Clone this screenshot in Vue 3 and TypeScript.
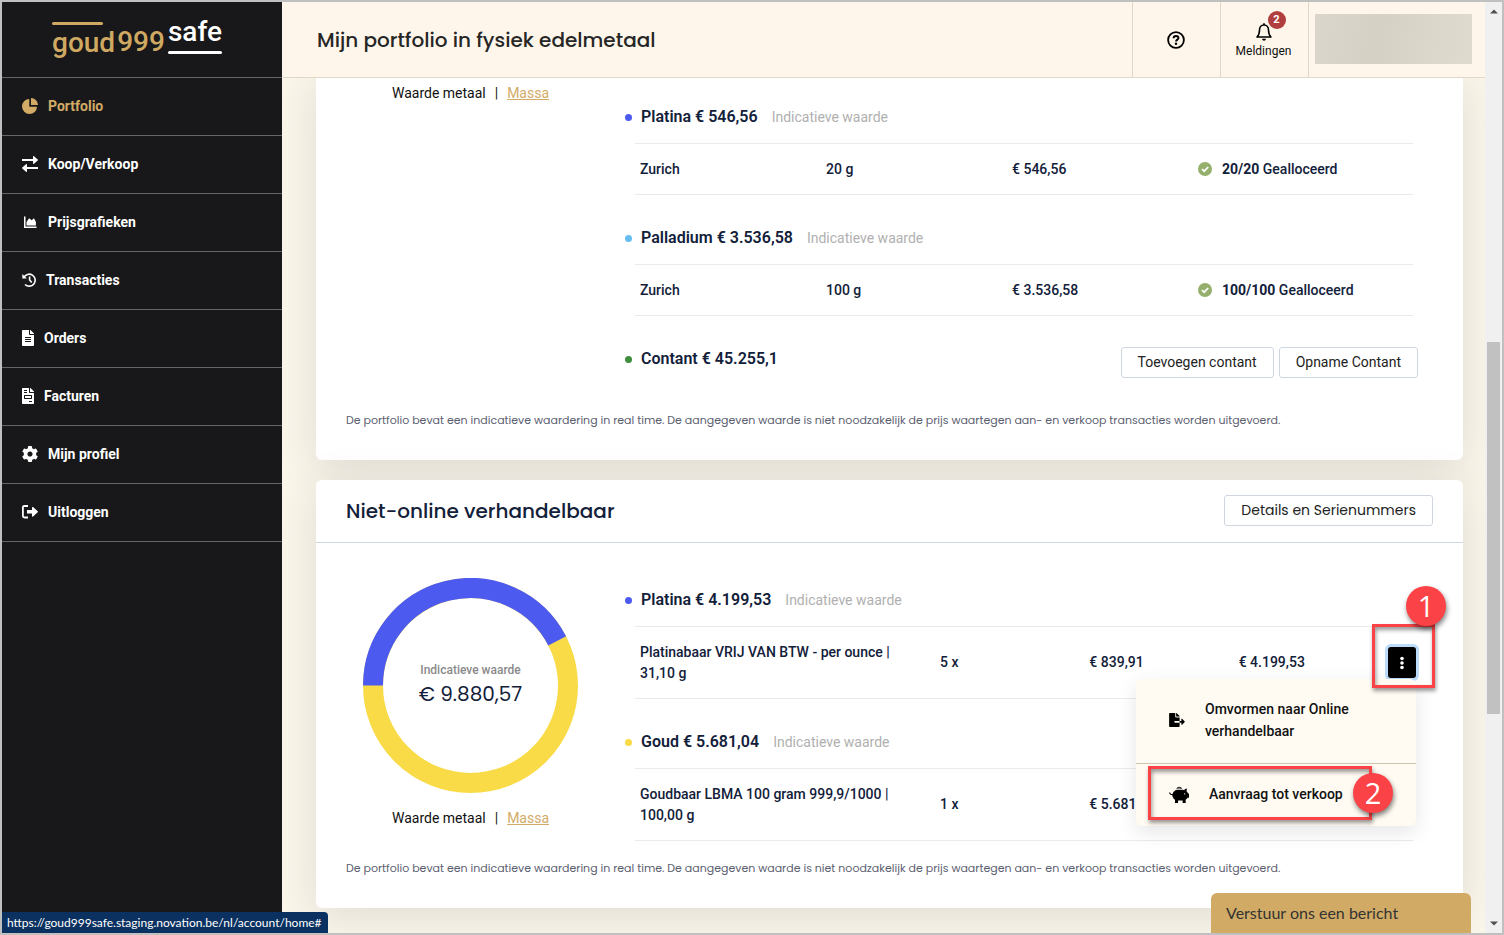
<script setup lang="ts">
import { ref } from 'vue'

interface NavItem { label: string; icon: string; width: number; active?: boolean }
interface Holding { metal: string; total: string; color: string; amount: string; value: string; allocated: string }
interface Product { metal: string; total: string; color: string; name: string; count: string; price: string; value: string; menu: boolean }

const nav: NavItem[] = [
  { label: 'Portfolio', icon: 'pie', width: 16, active: true },
  { label: 'Koop/Verkoop', icon: 'exchange', width: 16 },
  { label: 'Prijsgrafieken', icon: 'area', width: 16 },
  { label: 'Transacties', icon: 'history', width: 14 },
  { label: 'Orders', icon: 'file', width: 12 },
  { label: 'Facturen', icon: 'invoice', width: 12 },
  { label: 'Mijn profiel', icon: 'cog', width: 16 },
  { label: 'Uitloggen', icon: 'logout', width: 16 },
]

const holdings: Holding[] = [
  { metal: 'Platina', total: '€ 546,56', color: 'blue', amount: '20 g', value: '€ 546,56', allocated: '20/20' },
  { metal: 'Palladium', total: '€ 3.536,58', color: 'sky', amount: '100 g', value: '€ 3.536,58', allocated: '100/100' },
]

const products: Product[] = [
  { metal: 'Platina', total: '€ 4.199,53', color: 'blue', name: 'Platinabaar VRIJ VAN BTW - per ounce | 31,10 g', count: '5 x', price: '€ 839,91', value: '€ 4.199,53', menu: true },
  { metal: 'Goud', total: '€ 5.681,04', color: 'yellow', name: 'Goudbaar LBMA 100 gram 999,9/1000 | 100,00 g', count: '1 x', price: '€ 5.681,04', value: '', menu: false },
]

const note = 'De portfolio bevat een indicatieve waardering in real time. De aangegeven waarde is niet noodzakelijk de prijs waartegen aan- en verkoop transacties worden uitgevoerd.'
const menuOpen = ref(true)
</script>

<template>
  <div class="window">
    <aside class="sidebar">
      <a class="logo" href="#" aria-label="goud999safe">
        <span class="logo-goud">goud</span><span class="logo-nines">999</span><span class="logo-safe">safe</span>
      </a>
      <nav>
        <a v-for="item in nav" :key="item.label" href="#" class="nav-item" :class="{ active: item.active }">
          <svg v-if="item.icon === 'pie'" :width="item.width" height="16" viewBox="0 0 16 16"><path d="M7.3 1v7.7H15A7.5 7.5 0 1 1 7.3 1z" /><path d="M9 0a7.2 7.2 0 0 1 7 7H9z" /></svg>
          <svg v-else-if="item.icon === 'exchange'" :width="item.width" height="16" viewBox="0 0 16 16"><path d="M0 3h11V.7c0-.6.6-.9 1-.5l3.700 3.300c.4.400.4.700 0 1L12 7.800c-.4.400-1 .1-1-.5V5H0zM16 11H5V8.700c0-.6-.6-.9-1-.5L.3 11.500c-.4.400-.4.700 0 1L4 15.800c.4.400 1 .1 1-.5V13h11z" /></svg>
          <svg v-else-if="item.icon === 'area'" :width="item.width" height="16" viewBox="0 0 16 16"><path d="M2 2.500h1.500v10H14.500V14H2z" /><path d="M4.500 11.500V8l2.600-3.800 2.600 2 2.300-2 1.900 3.800v3.500z" /></svg>
          <svg v-else-if="item.icon === 'history'" :width="item.width" height="16" viewBox="0 0 14 16" fill="none" stroke="currentColor" stroke-width="1.6"><path d="M1.800 5.500A6 6 0 1 1 3 12.500" /><path d="M7.600 4.500V8l2.200 2.500" /><path d="M.3 2v4.500h4.500z" fill="currentColor" stroke="none" /></svg>
          <svg v-else-if="item.icon === 'file'" :width="item.width" height="16" viewBox="0 0 384 512"><path d="M224 136V0H24C10.700 0 0 10.700 0 24v464c0 13.300 10.700 24 24 24h336c13.300 0 24-10.700 24-24V160H248c-13.200 0-24-10.800-24-24zm64 236c0 6.600-5.400 12-12 12H108c-6.600 0-12-5.400-12-12v-8c0-6.600 5.400-12 12-12h168c6.600 0 12 5.400 12 12v8zm0-64c0 6.600-5.400 12-12 12H108c-6.600 0-12-5.400-12-12v-8c0-6.600 5.400-12 12-12h168c6.600 0 12 5.400 12 12v8zm0-72v8c0 6.600-5.400 12-12 12H108c-6.600 0-12-5.400-12-12v-8c0-6.600 5.400-12 12-12h168c6.600 0 12 5.400 12 12zm96-114.100v6.100H256V0h6.100c6.400 0 12.500 2.500 17 7l97.900 98c4.500 4.500 7 10.600 7 16.900z" /></svg>
          <svg v-else-if="item.icon === 'invoice'" :width="item.width" height="16" viewBox="0 0 384 512"><path d="M288 256H96v64h192v-64zm89-151L279.100 7c-4.500-4.500-10.600-7-17-7H256v128h128v-6.100c0-6.300-2.500-12.400-7-16.900zm-153 31V0H24C10.700 0 0 10.700 0 24v464c0 13.300 10.700 24 24 24h336c13.300 0 24-10.700 24-24V160H248c-13.200 0-24-10.800-24-24zM64 72c0-4.420 3.580-8 8-8h80c4.420 0 8 3.580 8 8v16c0 4.420-3.580 8-8 8H72c-4.420 0-8-3.580-8-8V72zm0 64c0-4.420 3.580-8 8-8h80c4.420 0 8 3.580 8 8v16c0 4.420-3.580 8-8 8H72c-4.420 0-8-3.580-8-8v-16zm256 304c0 4.420-3.580 8-8 8h-80c-4.420 0-8-3.580-8-8v-16c0-4.420 3.580-8 8-8h80c4.420 0 8 3.580 8 8v16zm0-200v96c0 8.840-7.160 16-16 16H80c-8.840 0-16-7.160-16-16v-96c0-8.840 7.160-16 16-16h224c8.840 0 16 7.160 16 16z" /></svg>
          <svg v-else-if="item.icon === 'cog'" :width="item.width" height="16" viewBox="8 8 496 496"><path d="M487.400 315.700l-42.600-24.600c4.300-23.200 4.300-47 0-70.200l42.600-24.600c4.900-2.800 7.100-8.600 5.500-14-11.100-35.600-30-67.800-54.700-94.600-3.800-4.100-10-5.100-14.800-2.300L380.800 110c-17.900-15.400-38.500-27.300-60.800-35.100V25.800c0-5.600-3.900-10.500-9.400-11.700-36.700-8.200-74.300-7.800-109.200 0-5.500 1.200-9.400 6.100-9.400 11.700V75c-22.200 7.900-42.800 19.800-60.800 35.100L88.700 85.500c-4.900-2.800-11-1.900-14.800 2.300-24.700 26.700-43.600 58.900-54.700 94.600-1.700 5.400.6 11.200 5.500 14L67.300 221c-4.300 23.200-4.300 47 0 70.200l-42.600 24.600c-4.900 2.800-7.100 8.600-5.500 14 11.100 35.600 30 67.800 54.700 94.600 3.800 4.100 10 5.100 14.800 2.300l42.600-24.600c17.900 15.400 38.500 27.300 60.800 35.100v49.200c0 5.600 3.900 10.500 9.400 11.700 36.700 8.200 74.300 7.800 109.200 0 5.500-1.200 9.400-6.100 9.400-11.700v-49.200c22.200-7.900 42.800-19.800 60.800-35.100l42.600 24.600c4.900 2.800 11 1.900 14.800-2.300 24.700-26.700 43.600-58.900 54.700-94.600 1.500-5.500-.7-11.300-5.600-14.100zM256 336c-44.100 0-80-35.900-80-80s35.900-80 80-80 80 35.900 80 80-35.900 80-80 80z" /></svg>
          <svg v-else :width="item.width" height="16" viewBox="0 0 16 16"><path d="M6 2H2.500C1.200 2 .9 2.500.9 3.500v8.500c0 1 .3 1.500 1.600 1.500H6" fill="none" stroke="currentColor" stroke-width="1.800" /><path d="M5 6h5V3.600c0-.7.6-.9 1.100-.5L15.700 7.300c.4.400.4.700 0 1l-4.600 4.200c-.5.400-1.100.2-1.100-.5V9.600H5z" /></svg>
          <span>{{ item.label }}</span>
        </a>
      </nav>
    </aside>

    <header class="topbar">
      <h1>Mijn portfolio in fysiek edelmetaal</h1>
      <button class="top-cell" type="button" aria-label="Help">
        <svg width="18" height="18" viewBox="0 0 18 18" fill="none" stroke="#000" stroke-width="1.800"><circle cx="9" cy="9" r="7.900" /><path d="M6.600 7.200C6.700 5.600 7.700 4.900 9 4.900s2.400.8 2.400 2c0 1.700-2.300 1.700-2.300 3.600" stroke-width="2" /><circle cx="9" cy="12.800" r="1.200" fill="#000" stroke="none" /></svg>
      </button>
      <button class="top-cell bell" type="button">
        <span class="bell-icon">
          <svg width="16" height="18" viewBox="0 0 16 18" fill="none" stroke="#000" stroke-width="1.600"><path d="M8 2c-3 0-4.500 2.200-4.500 5 0 3.600-.9 5.600-2.500 7h14c-1.600-1.400-2.500-3.400-2.500-7 0-2.800-1.500-5-4.500-5z" stroke-linejoin="round" /><path d="M8 2V.3" /><path d="M6 15.800h4c-.2 1.300-1 1.900-2 1.900s-1.800-.6-2-1.900z" fill="#000" stroke="none" /></svg>
          <span class="count">2</span>
        </span>
        <span>Meldingen</span>
      </button>
      <div class="top-cell user"><div class="user-mask"></div></div>
    </header>

    <main class="content">
      <section class="card first">
        <div class="columns">
          <div class="switch">
            <span>Waarde metaal</span><span class="bar">|</span><a href="#">Massa</a>
          </div>
          <div class="metals">
            <template v-for="h in holdings" :key="h.metal">
              <h3 class="metal"><i class="dot" :class="h.color"></i>{{ h.metal }} {{ h.total }}<small>Indicatieve waarde</small></h3>
              <table class="rows stock">
                <tbody>
                  <tr>
                    <td>Zurich</td>
                    <td>{{ h.amount }}</td>
                    <td>{{ h.value }}</td>
                    <td>
                      <span class="allocated">
                        <svg width="14" height="14" viewBox="0 0 14 14"><circle cx="7" cy="7" r="7" fill="#94b06c" /><path d="M4 7.100l2.200 2.100L10.200 5" fill="none" stroke="#fff" stroke-width="1.700" /></svg>
                        <span><b>{{ h.allocated }}</b> Gealloceerd</span>
                      </span>
                    </td>
                  </tr>
                </tbody>
              </table>
            </template>
            <div class="cash">
              <h3 class="metal"><i class="dot green"></i>Contant € 45.255,1</h3>
              <div class="actions">
                <button type="button" class="btn">Toevoegen contant</button>
                <button type="button" class="btn">Opname Contant</button>
              </div>
            </div>
          </div>
        </div>
        <p class="note">{{ note }}</p>
      </section>

      <section class="card">
        <header class="card-head">
          <h2>Niet-online verhandelbaar</h2>
          <button type="button" class="btn details">Details en Serienummers</button>
        </header>
        <div class="columns">
          <div class="chart">
            <div class="donut">
              <svg width="215" height="215" viewBox="0 0 215 215" fill="none" stroke-width="20" aria-hidden="true">
                <circle cx="107.500" cy="107.500" r="97.500" stroke="#f9db48" />
                <path d="M10 107.500A97.500 97.500 0 0 1 194.200 62.900" stroke="#4d5af0" />
              </svg>
              <div class="donut-text"><span>Indicatieve waarde</span><strong>€ 9.880,57</strong></div>
            </div>
            <div class="switch">
              <span>Waarde metaal</span><span class="bar">|</span><a href="#">Massa</a>
            </div>
          </div>
          <div class="metals offset">
            <template v-for="p in products" :key="p.metal">
              <h3 class="metal"><i class="dot" :class="p.color"></i>{{ p.metal }} {{ p.total }}<small>Indicatieve waarde</small></h3>
              <table class="rows products">
                <tbody>
                  <tr>
                    <td>{{ p.name }}</td>
                    <td>{{ p.count }}</td>
                    <td>{{ p.price }}</td>
                    <td>{{ p.value }}</td>
                    <td>
                      <div v-if="p.menu" class="more">
                        <button type="button" class="more-btn" aria-label="Acties" :aria-expanded="menuOpen" @click="menuOpen = !menuOpen">
                          <svg width="4" height="14" viewBox="0 0 4 14" fill="#fff"><circle cx="2" cy="2.500" r="1.800" /><circle cx="2" cy="7" r="1.800" /><circle cx="2" cy="11.500" r="1.800" /></svg>
                        </button>
                        <div v-if="menuOpen" class="menu">
                          <a href="#" class="menu-item">
                            <svg width="16" height="14" viewBox="0 0 576 512"><path d="M384 121.900c0-6.300-2.500-12.400-7-16.900L279.100 7c-4.500-4.500-10.600-7-17-7H256v128h128zM571 308l-95.700-96.400c-10.100-10.100-27.400-3-27.400 11.300V288h-64v64h64v65.200c0 14.300 17.300 21.400 27.400 11.300L571 332c6.600-6.600 6.600-17.400 0-24zm-379 28v-32c0-8.800 7.200-16 16-16h176V160H248c-13.200 0-24-10.800-24-24V0H24C10.700 0 0 10.700 0 24v464c0 13.300 10.700 24 24 24h336c13.300 0 24-10.700 24-24V352H208c-8.800 0-16-7.200-16-16z" /></svg>
                            <span>Omvormen naar Online verhandelbaar</span>
                          </a>
                          <a href="#" class="menu-item sell">
                            <svg width="20" height="19" viewBox="0 0 21 19"><path d="M7.600 3.600a3.300 3.300 0 0 1 6.300 0 12 12 0 0 0-6.300 0z" fill="#333" /><path d="M9 4.600h4.600c.8 0 1.500.1 2.200.4.800-.9 1.700-1.600 3.100-1.800l-.5 3c.8.700 1.300 1.500 1.600 2.300h1V13h-1.500c-.5.800-1.100 1.400-2 1.900V18.500h-3.200v-2.700H9.500v2.700H6.300v-3.400C4.700 14 3.600 12.300 3.500 10.300 1.600 10.200.2 9.100.1 7.300h1.200c.1 1 .9 1.600 2.400 1.700C4.500 6.300 6.500 4.600 9 4.600z" /><circle cx="16.500" cy="8.800" r=".7" fill="#fffbf3" /></svg>
                            <span>Aanvraag tot verkoop</span>
                          </a>
                          <div class="mark mark-two"><span>2</span></div>
                        </div>
                        <div class="mark mark-one"><span>1</span></div>
                      </div>
                    </td>
                  </tr>
                </tbody>
              </table>
            </template>
          </div>
        </div>
        <p class="note">{{ note }}</p>
      </section>
    </main>

    <div class="scrollbar" aria-hidden="true">
      <svg width="8" height="5" viewBox="0 0 8 5"><path d="M0 4.500L4 .5l4 4z" fill="#505050" /></svg>
      <div class="track"><div class="thumb"></div></div>
      <svg width="8" height="5" viewBox="0 0 8 5"><path d="M0 .5l4 4 4-4z" fill="#505050" /></svg>
    </div>

    <button type="button" class="chat">Verstuur ons een bericht</button>
    <div class="status">https://goud999safe.staging.novation.be/nl/account/home#</div>
  </div>
</template>

<style>
body { margin: 0; }
</style>

<style scoped>
* { box-sizing: border-box; }
a { color: inherit; text-decoration: none; }
button { font: inherit; color: inherit; cursor: pointer; }
h1, h2, h3, p { margin: 0; }

.window {
  position: relative;
  display: grid;
  grid-template: 76px minmax(0, 1fr) / 280px minmax(0, 1fr) 17px;
  height: 100vh;
  overflow: hidden;
  border: 2px solid #c0c0c0;
  background: #fbf6ea;
  color: #12203a;
  font: 14px/20px Roboto, "Liberation Sans", sans-serif;
}

.sidebar { grid-row: 1 / 3; background: #18181a; color: #fff; }
.logo {
  display: flex;
  justify-content: center;
  align-items: flex-start;
  height: 76px;
  padding: 18px 10px 0 0;
  border-bottom: 1px solid #66666a;
  font: 500 28px/40px Roboto, sans-serif;
  color: #cfa961;
}
.logo-goud {
  position: relative;
  margin-top: 3px;
}
.logo-goud::before, .logo-safe::after {
  content: "";
  position: absolute;
  left: 0;
  height: 3px;
  border-radius: 2px;
  background: currentColor;
}
.logo-goud::before { top: -1px; right: 12px; }
.logo-nines { margin: 2px 3px 0 2px; }
.logo-safe { position: relative; margin-top: -8px; color: #fff; }
.logo-safe::after { top: 39px; right: 0; }

.nav-item {
  display: flex;
  align-items: center;
  gap: 10px;
  height: 58px;
  padding: 0 0 2px 20px;
  border-bottom: 1px solid #66666a;
  font-weight: 700;
}
.nav-item.active { color: #d3ab66; }
.nav-item svg { fill: currentColor; }
.nav-item svg[fill="none"] { fill: none; }

.topbar {
  display: flex;
  background: #fef6ea;
  border-bottom: 1px solid #e0d8c6;
  color: #262626;
}
.topbar h1 {
  flex: 1;
  padding-left: 35px;
  font: 500 20px/77px Poppins, Inter, sans-serif;
  white-space: nowrap;
}
.top-cell {
  display: flex;
  flex-direction: column;
  align-items: center;
  justify-content: center;
  width: 88px;
  padding: 0 2px 0 0;
  border: 0;
  border-left: 1px solid #e0d8c6;
  background: none;
}
.bell { padding-top: 4px; font-size: 12px; line-height: 18px; color: #111; }
.bell-icon { position: relative; height: 18px; margin-bottom: 1px; }
.count {
  position: absolute;
  left: 12px;
  top: -12px;
  width: 18px;
  height: 18px;
  border-radius: 50%;
  background: #b03e3e;
  color: #fff;
  font-weight: 700;
  font-size: 11px;
}
.user { width: 177px; align-items: flex-start; padding: 0 0 2px 6px; }
.user-mask { width: 157px; height: 50px; background: linear-gradient(100deg, #dad6cc, #d5d1c5 40%, #dfdbcf); }

.content { overflow: hidden; padding: 0 22px 0 34px; }
.card {
  margin-top: 20px;
  padding-bottom: 30px;
  border-radius: 6px;
  background: #fff;
  box-shadow: 0 8px 44px rgba(35, 45, 65, .13);
}
.card.first { margin-top: -4px; }
.card-head {
  display: flex;
  justify-content: space-between;
  align-items: flex-start;
  height: 63px;
  padding: 15px 30px 0;
  border-bottom: 1px solid #cfd6e0;
}
.card-head h2 { font: 500 20px/32px Poppins, Inter, sans-serif; }
.columns { display: grid; grid-template-columns: 249px minmax(0, 1fr); gap: 30px; padding: 0 45px 0 30px; }
.first .switch { padding-top: 9px; }
.switch { display: flex; justify-content: center; gap: 9px; color: #111; }
.switch a { color: #d3ab66; text-decoration: underline; }

.metals { padding-right: 5px; }
.metals.offset { padding-top: 14px; }
.metal {
  display: flex;
  align-items: center;
  padding: 31px 0 14px;
  font-size: 16px;
  line-height: 24px;
  font-weight: 600;
}
.metal small { margin-left: 14px; font-size: 14px; font-weight: 400; color: #b0b0b0; }
.dot { width: 7px; height: 7px; margin-right: 9px; border-radius: 50%; }
.blue { background: #4d5af0; }
.sky { background: #66bdf2; }
.green { background: #3f8f3f; }
.yellow { background: #f9db48; }

.rows {
  width: calc(100% - 10px);
  margin-left: 10px;
  border-collapse: separate;
  border-spacing: 0;
  table-layout: fixed;
  border-top: 1px solid #ebebeb;
  border-bottom: 1px solid #ebebeb;
  font-weight: 500;
}
td { padding: 0 0 0 5px; }
.stock { height: 52px; }
.stock td { width: 186px; }
.stock td:last-child { width: auto; }
.products { height: 73px; }
.products td { line-height: 21px; }
.products td:first-child { width: 300px; padding-right: 36px; }
.products td:last-child { width: 30px; }
.allocated { display: flex; align-items: center; gap: 10px; }

.cash { display: flex; justify-content: space-between; padding-bottom: 8px; }
.actions { display: flex; gap: 5px; margin: 31px -5px 0 0; }
.btn {
  height: 31px;
  padding: 0 16px 2px;
  border: 1px solid #cfd6e0;
  border-radius: 3px;
  background: #fff;
  color: #222;
  white-space: nowrap;
}
.details { font: 14px/20px Poppins, Inter, sans-serif; }

.note {
  margin-top: 17px;
  padding: 0 30px;
  font: 11px/20px Poppins, Inter, sans-serif;
  color: #5b6070;
}

.chart { padding-top: 35px; }
.donut { position: relative; width: 215px; margin: 0 auto 15px; }
.donut svg { display: block; }
.donut-text {
  position: absolute;
  inset: 0;
  display: flex;
  flex-direction: column;
  align-items: center;
  padding-top: 82px;
  font-size: 12px;
  font-weight: 500;
  color: #8a8a8a;
}
.donut-text strong { font: 400 20px/28px Poppins, Inter, sans-serif; color: #12203a; }

.more { position: relative; width: 28px; height: 31px; }
.more-btn {
  display: flex;
  align-items: center;
  justify-content: center;
  width: 28px;
  height: 31px;
  padding: 0;
  border: 0;
  border-radius: 3px;
  background: #000;
  box-shadow: 0 0 0 3px #bcdcfc;
}
.menu {
  position: absolute;
  z-index: 2;
  right: 0;
  top: 32px;
  width: 280px;
  border-radius: 6px;
  background: #fffbf3;
  box-shadow: 0 6px 20px rgba(0, 0, 0, .1);
  color: #111;
}
.menu-item {
  display: flex;
  align-items: center;
  gap: 20px;
  height: 85px;
  padding: 0 33px 2px;
  border-bottom: 1px solid #cdc5af;
  line-height: 22px;
}
.menu-item svg { flex: none; }
.menu-item.sell { height: 62px; border: 0; }
.mark { position: absolute; border: 3px solid #fb4347; box-shadow: 1px 3px 4px rgba(0, 0, 0, .4), inset 1px 3px 4px rgba(0, 0, 0, .4); pointer-events: none; }
.mark span {
  position: absolute;
  width: 40px;
  height: 40px;
  border-radius: 50%;
  background: #fb4347;
  box-shadow: 1px 3px 5px rgba(0, 0, 0, .5);
  color: #fff;
  font: 29px/40px "Open Sans", sans-serif;
  text-align: center;
}
.mark-one { z-index: 3; left: -16px; top: -23px; width: 63px; height: 64px; }
.mark-one span { right: -14px; top: -41px; }
.mark-two { left: 12px; top: 87px; width: 224px; height: 54px; }
.mark-two span { right: -24px; top: 4px; }

.scrollbar {
  grid-area: 1 / 3 / 3 / 4;
  display: flex;
  flex-direction: column;
  align-items: center;
  padding: 7px 0;
  background: #f0f0f0;
}
.track { flex: 1; width: 13px; }
.thumb { height: 41%; margin-top: 328px; background: #c1c1c1; }

.chat {
  position: absolute;
  z-index: 4;
  right: 31px;
  bottom: 0;
  width: 260px;
  height: 40px;
  padding: 0 15px;
  border: 0;
  border-radius: 6px 6px 0 0;
  background: #d1ab66;
  color: #333;
  font: 16px/24px Lato, sans-serif;
  text-align: left;
}
.status {
  position: absolute;
  left: 0;
  bottom: 0;
  padding: 0 6px 0 5px;
  border-radius: 0 4px 0 0;
  background: #0a3160;
  color: #fff;
  font: 12px/21px Lato, "Open Sans", sans-serif;
}
</style>
